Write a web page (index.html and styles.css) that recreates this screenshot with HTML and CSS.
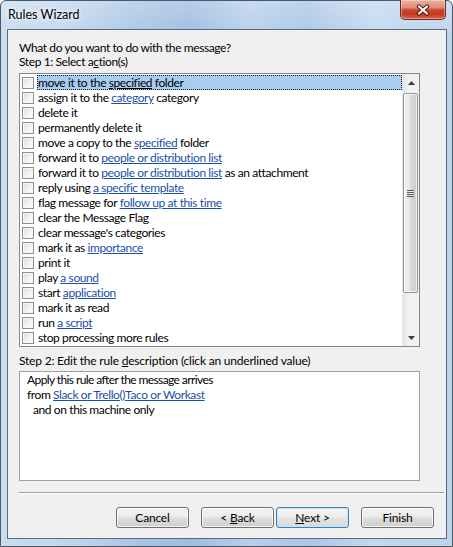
FILE: index.html
```html
<!DOCTYPE html>
<html>
<head>
<meta charset="utf-8">
<title>Rules Wizard</title>
<link rel="stylesheet" href="styles.css">
</head>
<body>
<div class="window">
  <div class="titlebar">
    <span class="title">Rules Wizard</span>
    <div class="close">
      <svg width="16" height="12" viewBox="0 0 16 12"><path d="M4 2.5 L12 9.5 M12 2.5 L4 9.5" stroke="#4a1a12" stroke-width="4.2" stroke-linecap="round" fill="none"/><path d="M4 2.5 L12 9.5 M12 2.5 L4 9.5" stroke="#ffffff" stroke-width="2.2" stroke-linecap="round" fill="none"/></svg>
    </div>
  </div>
  <div class="client">
    <div class="text">What do you want to do with the message?</div>
    <div class="text">Step 1: Select a<u>c</u>tion(s)</div>
    <div class="listbox">
      <div class="rows">
        <div class="row"><span class="check"></span><span class="label selected">move it to the <u>specified</u> folder</span></div>
        <div class="row"><span class="check"></span><span class="label">assign it to the <a>category</a> category</span></div>
        <div class="row"><span class="check"></span><span class="label">delete it</span></div>
        <div class="row"><span class="check"></span><span class="label">permanently delete it</span></div>
        <div class="row"><span class="check"></span><span class="label">move a copy to the <a>specified</a> folder</span></div>
        <div class="row"><span class="check"></span><span class="label">forward it to <a>people or distribution list</a></span></div>
        <div class="row"><span class="check"></span><span class="label">forward it to <a>people or distribution list</a> as an attachment</span></div>
        <div class="row"><span class="check"></span><span class="label">reply using <a>a specific template</a></span></div>
        <div class="row"><span class="check"></span><span class="label">flag message for <a>follow up at this time</a></span></div>
        <div class="row"><span class="check"></span><span class="label">clear the Message Flag</span></div>
        <div class="row"><span class="check"></span><span class="label">clear message's categories</span></div>
        <div class="row"><span class="check"></span><span class="label">mark it as <a>importance</a></span></div>
        <div class="row"><span class="check"></span><span class="label">print it</span></div>
        <div class="row"><span class="check"></span><span class="label">play <a>a sound</a></span></div>
        <div class="row"><span class="check"></span><span class="label">start <a>application</a></span></div>
        <div class="row"><span class="check"></span><span class="label">mark it as read</span></div>
        <div class="row"><span class="check"></span><span class="label">run <a>a script</a></span></div>
        <div class="row"><span class="check"></span><span class="label">stop processing more rules</span></div>
      </div>
      <div class="scrollbar">
        <div class="sb-btn"><svg width="7" height="4" viewBox="0 0 7 4"><path d="M0 4 L3.5 0 L7 4 Z" fill="#3b3b3b"/></svg></div>
        <div class="sb-track"><div class="thumb"><span class="grip"></span></div></div>
        <div class="sb-btn"><svg width="7" height="4" viewBox="0 0 7 4"><path d="M0 0 L7 0 L3.5 4 Z" fill="#3b3b3b"/></svg></div>
      </div>
    </div>
    <div class="text step2">Step 2: Edit the rule <u>d</u>escription (click an underlined value)</div>
    <div class="descbox">
      <div class="tight">Apply this rule after the message arrives</div>
      <div>from <a>Slack or Trello()Taco or Workast</a></div>
      <div class="indent">and on this machine only</div>
    </div>
    <div class="separator"></div>
    <div class="buttons">
      <button class="btn">Cancel</button>
      <button class="btn back">&lt; <u>B</u>ack</button>
      <button class="btn default"><u>N</u>ext &gt;</button>
      <button class="btn finish">Finish</button>
    </div>
  </div>
</div>
</body>
</html>
```
FILE: styles.css
```css
* { box-sizing: border-box; }
html, body { margin: 0; padding: 0; }
body {
  width: 453px;
  height: 547px;
  font-family: Lato, "Open Sans", sans-serif;
  font-size: 12px;
  letter-spacing: -0.4px;
  color: #000;
  background: #ffffff;
}
.window {
  width: 453px;
  height: 547px;
  display: flex;
  flex-direction: column;
  padding: 0 5px 7px 6px;
  border: 1px solid #4a5868;
  border-radius: 6px 6px 0 0;
  background:
    linear-gradient(to bottom, rgba(255,255,255,0.25), rgba(255,255,255,0) 40px),
    linear-gradient(to right, #c9dcf0 0%, #c1d6ee 15%, #a9c5e5 30%, #9dbde2 42%, #b6cfeb 55%, #aac6e6 68%, #c3d8ef 82%, #bdd3ec 100%);
}
.titlebar {
  height: 28px;
  display: flex;
  align-items: flex-start;
}
.title {
  margin-left: 1px;
  padding-top: 6px;
  line-height: 15px;
  font-size: 12.5px;
  letter-spacing: 0;
  text-shadow: 0 0 6px #ffffff, 0 0 3px rgba(255,255,255,0.9);
}
.close {
  margin-left: auto;
  margin-right: 1px;
  margin-top: -1px;
  width: 46px;
  height: 20px;
  border: 1px solid #70291c;
  border-top: none;
  border-radius: 0 0 5px 5px;
  background: linear-gradient(to bottom, #eab2a4 0%, #e08c77 40%, #c9472e 52%, #c3391f 75%, #d76a4e 100%);
  box-shadow: inset 0 0 0 1px rgba(255,255,255,0.35);
  display: flex;
  align-items: center;
  justify-content: center;
}
.client {
  flex: 1;
  display: flex;
  flex-direction: column;
  background: #f0f0f0;
  border: 1px solid #5b6b7e;
  padding: 11px 2px 0 11px;
}
.text {
  line-height: 14px;
  white-space: nowrap;
}
u { text-decoration: underline; }
a { color: #1b4fa7; text-decoration: underline; }
.listbox {
  margin-top: 4px;
  width: 401px;
  height: 274px;
  border: 1px solid #828790;
  background: #ffffff;
  display: flex;
}
.rows {
  flex: 1;
  padding-top: 1px;
  display: flex;
  flex-direction: column;
}
.row {
  height: 15px;
  display: flex;
  align-items: flex-start;
  line-height: 13px;
}
.check {
  flex: none;
  width: 12px;
  height: 12px;
  margin: 2px 3px 0 2px;
  border: 1px solid #8e8f8f;
  background: linear-gradient(135deg, #dcdcdc 0%, #f4f4f4 60%, #ffffff 100%);
  box-shadow: inset 0 0 0 1px #f6f6f6;
}
.label {
  flex: 1;
  height: 15px;
  line-height: 13px;
  border: 1px solid transparent;
  padding-left: 0;
  white-space: nowrap;
}
.label.selected {
  background: #a7cdf1;
  border: 1px dotted #1a1a1a;
}
.scrollbar {
  width: 17px;
  display: flex;
  flex-direction: column;
  background: linear-gradient(to right, #e4e4e4 0%, #f1f1f1 30%, #f1f1f1 100%);
  border-left: 1px solid #e8e8e8;
}
.sb-btn {
  height: 17px;
  display: flex;
  align-items: center;
  justify-content: center;
  padding-left: 1px;
}
.sb-track {
  flex: 1;
  padding-top: 2px;
}
.thumb {
  height: 200px;
  margin-right: 1px;
  border: 1px solid #979797;
  border-radius: 2px;
  background: linear-gradient(to right, #f3f3f3 0%, #e8e8e8 40%, #d6d6d6 55%, #cdcdcd 100%);
  box-shadow: inset 0 0 0 1px rgba(255,255,255,0.7);
  display: flex;
  align-items: center;
  justify-content: center;
}
.grip {
  width: 7px;
  height: 7px;
  background: repeating-linear-gradient(to bottom, #5a5a5a 0, #5a5a5a 1px, #e8e8e8 1px, #e8e8e8 2px);
}
.step2 { margin-top: 7px; letter-spacing: -0.2px; }
.descbox {
  margin-top: 3px;
  width: 401px;
  height: 110px;
  border: 1px solid #a0a0a0;
  background: #ffffff;
  padding: 0 0 0 7px;
  line-height: 15px;
  white-space: nowrap;
}
.tight { letter-spacing: -0.6px; }
.indent { padding-left: 6px; }
.separator {
  margin-top: 11px;
  height: 2px;
  border-top: 1px solid #a0a0a0;
  border-bottom: 1px solid #ffffff;
}
.buttons {
  margin-top: 13px;
  display: flex;
  justify-content: flex-end;
  padding-right: 10px;
}
.btn {
  width: 73px;
  height: 21px;
  padding: 0;
  font: inherit;
  letter-spacing: -0.2px;
  line-height: 17px;
  color: #000;
  border: 1px solid #707070;
  border-radius: 3px;
  background: linear-gradient(to bottom, #f2f2f2 0%, #ebebeb 48%, #dddddd 52%, #cfcfcf 100%);
  box-shadow: inset 0 0 0 1px rgba(255,255,255,0.75);
}
.back { margin-left: 12px; }
.default {
  margin-left: 2px;
  border-color: #3c7fb1;
  box-shadow: inset 0 0 0 1px #bde6fa;
  background: linear-gradient(to bottom, #f4f4f4 0%, #eeeeee 48%, #e3e3e3 52%, #d9d9d9 100%);
}
.finish { margin-left: 12px; }
```
